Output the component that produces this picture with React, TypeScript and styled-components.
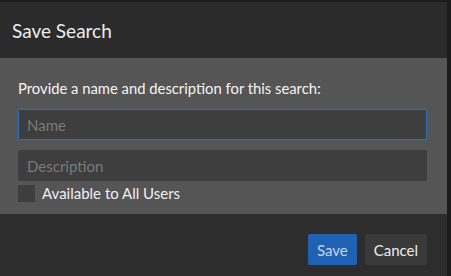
import React from "react";
import styled, { createGlobalStyle } from "styled-components";

const GlobalStyle = createGlobalStyle`
  html, body {
    margin: 0;
    padding: 0;
    background: #181818;
  }
  * {
    box-sizing: border-box;
  }
`;

const App = () => {
  return (
    <>
      <GlobalStyle />
      <Page>
        <Dialog>
          <Header>Save Search</Header>
          <Body>
            <Prompt>Provide a name and description for this search:</Prompt>
            <Input placeholder="Name" $focused />
            <Input placeholder="Description" />
            <CheckRow>
              <CheckBox />
              <CheckLabel>Available to All Users</CheckLabel>
            </CheckRow>
          </Body>
          <Footer>
            <Button $primary>Save</Button>
            <Button>Cancel</Button>
          </Footer>
        </Dialog>
      </Page>
    </>
  );
};

export default App;

const Page = styled.div`
  display: flex;
  width: 451px;
  height: 276px;
  padding-top: 2px;
  background: #1c1c1c;
  font-family: Lato, "Open Sans", sans-serif;
  overflow: hidden;
`;

const Dialog = styled.div`
  display: flex;
  flex-direction: column;
  width: 447px;
  height: 274px;
`;

const Header = styled.div`
  display: flex;
  align-items: center;
  height: 56px;
  padding-left: 12px;
  background: #2b2b2b;
  color: #ececec;
  font-size: 19px;
`;

const Body = styled.div`
  display: flex;
  flex-direction: column;
  height: 156px;
  padding: 18px 20px 0 18px;
  background: #555555;
`;

const Prompt = styled.div`
  height: 25px;
  color: #f4f4f4;
  font-size: 14.8px;
  line-height: 24px;
`;

const Input = styled.input<{ $focused?: boolean }>`
  width: 100%;
  height: 31px;
  margin-top: ${(p) => (p.$focused ? "8px" : "10px")};
  padding: 0 8px;
  background: #3e3e3e;
  border: 1px solid ${(p) => (p.$focused ? "#2f6db8" : "#3e3e3e")};
  border-radius: 2px;
  box-shadow: ${(p) => (p.$focused ? "0 0 2px rgba(47, 109, 184, 0.7)" : "none")};
  color: #ddd;
  font-family: Lato, "Open Sans", sans-serif;
  font-size: 15px;
  outline: none;

  &::placeholder {
    color: #7a7a7a;
  }
`;

const CheckRow = styled.div`
  display: flex;
  align-items: center;
  gap: 7px;
  margin-top: 3px;
`;

const CheckBox = styled.span`
  width: 17px;
  height: 17px;
  background: #3e3e3e;
`;

const CheckLabel = styled.span`
  color: #f0f0f0;
  font-size: 15px;
`;

const Footer = styled.div`
  display: flex;
  justify-content: flex-end;
  align-items: flex-start;
  gap: 8px;
  flex: 1;
  padding: 20px 20px 0 0;
  background: #2d2d2d;
`;

const Button = styled.button<{ $primary?: boolean }>`
  height: 31px;
  padding: 0 9px;
  border: none;
  border-radius: 2px;
  background: ${(p) => (p.$primary ? "#1f62b3" : "#3a3a3a")};
  color: ${(p) => (p.$primary ? "#c9d6ea" : "#ededed")};
  font-family: Lato, "Open Sans", sans-serif;
  font-size: 15px;
`;
